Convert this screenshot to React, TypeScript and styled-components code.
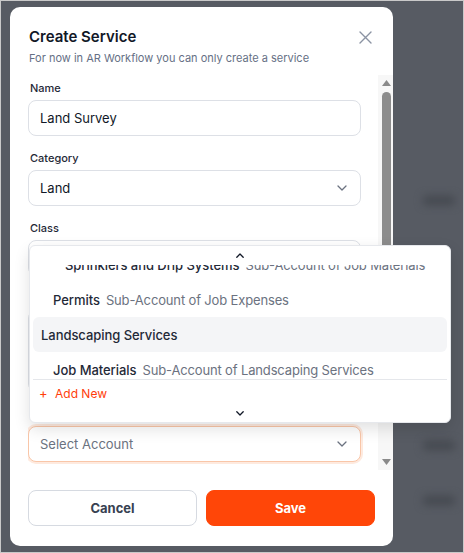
import React from 'react';
import styled, { createGlobalStyle } from 'styled-components';

const GlobalStyle = createGlobalStyle`
  html, body { margin: 0; padding: 0; background: #575b63; }
  body { font-family: Inter, "Noto Sans", Arial, sans-serif; -webkit-font-smoothing: antialiased; }
  * { box-sizing: border-box; }
`;

const Screen = styled.div`
  position: relative;
  width: 464px;
  height: 553px;
  overflow: hidden;
  background: #575b63;
  border: 1px solid #c9c9c9;
`;

const BackdropPage = styled.div`
  height: 100%;
  display: flex;
  flex-direction: column;
  align-items: flex-end;
  padding: 195px 8px 0 0;
  filter: blur(4px);
`;

const GhostCell = styled.div<{ $gap: number }>`
  width: 32px;
  height: 9px;
  border-radius: 4px;
  background: #44484f;
  margin-top: ${(p) => p.$gap}px;
`;

const Overlay = styled.div`
  position: absolute;
  inset: 0;
  display: flex;
  align-items: flex-start;
  padding: 6px 0 0 9px;
`;

const Modal = styled.div`
  width: 383px;
  background: #ffffff;
  border-radius: 10px;
  padding: 20px 18px 20px 18px;
  display: flex;
  flex-direction: column;
`;

const Header = styled.div`
  display: flex;
  align-items: center;
  justify-content: space-between;
  height: 20px;
`;

const Title = styled.h2`
  margin: 0;
  font-size: 15px;
  line-height: 20px;
  font-weight: 600;
  color: #111827;
  padding-left: 1px;
`;

const CloseButton = styled.button`
  width: 20px;
  height: 20px;
  border: none;
  background: none;
  padding: 0;
  display: flex;
  align-items: center;
  justify-content: center;
  color: #8b93a3;
`;

const Subtitle = styled.p`
  margin: 3px 0 0;
  font-size: 11px;
  line-height: 16px;
  color: #667085;
  padding-left: 1px;
`;

const Body = styled.div`
  margin: 9px -18px 0 0;
  height: 395px;
  display: flex;
`;

const Content = styled.div`
  flex: 1;
  overflow: hidden;
  padding: 5px 17px 0 0;
  display: flex;
  flex-direction: column;
  gap: 14px;
`;

const Field = styled.div`
  display: flex;
  flex-direction: column;
  gap: 4px;
`;

const Label = styled.label`
  font-size: 11px;
  line-height: 16px;
  font-weight: 500;
  color: #1f2937;
  padding-left: 2px;
`;

const Input = styled.div<{ $focused?: boolean; $tall?: boolean }>`
  height: ${(p) => (p.$tall ? 82 : 36)}px;
  border: 1px solid ${(p) => (p.$focused ? '#f9c6a8' : '#dde0e6')};
  box-shadow: ${(p) => (p.$focused ? '0 0 0 2px #feeadf' : 'none')};
  border-radius: 8px;
  padding: 0 13px 0 11px;
  display: flex;
  align-items: center;
  justify-content: space-between;
  font-size: 13px;
  color: #111827;
  background: #fff;
`;

const Placeholder = styled.span`
  color: #6b7280;
`;

const Scrollbar = styled.div`
  width: 15px;
  background: #f7f7f7;
  display: flex;
  flex-direction: column;
  align-items: center;
  padding-left: 1px;
`;

const ArrowBox = styled.div`
  height: 16px;
  display: flex;
  align-items: center;
  justify-content: center;
`;

const Thumb = styled.div`
  width: 9px;
  height: 250px;
  border-radius: 5px;
  background: #8c8c8c;
  margin-top: 1px;
`;

const Spacer = styled.div`
  flex: 1;
`;

const Footer = styled.div`
  margin-top: 20px;
  display: flex;
  gap: 9px;
`;

const Button = styled.button<{ $primary?: boolean }>`
  flex: 1;
  height: 36px;
  border-radius: 8px;
  border: 1px solid ${(p) => (p.$primary ? '#ff4608' : '#d6dae1')};
  background: ${(p) => (p.$primary ? '#ff4608' : '#ffffff')};
  color: ${(p) => (p.$primary ? '#ffffff' : '#374151')};
  font-family: inherit;
  font-size: 13px;
  font-weight: 700;
`;

const Dropdown = styled.div`
  position: absolute;
  left: 28px;
  top: 244px;
  width: 422px;
  height: 178px;
  background: #ffffff;
  border: 1px solid #e6e8ec;
  border-radius: 6px;
  box-shadow: 0 6px 16px rgba(0, 0, 0, 0.12);
  padding: 0 3px 2px;
  display: flex;
  flex-direction: column;
`;

const ScrollButton = styled.div<{ $h: number }>`
  height: ${(p) => p.$h}px;
  flex-shrink: 0;
  display: flex;
  align-items: center;
  justify-content: center;
  color: #111827;
`;

const Viewport = styled.div`
  height: 114px;
  flex-shrink: 0;
  overflow: hidden;
`;

const List = styled.div`
  margin-top: -18px;
  display: flex;
  flex-direction: column;
`;

const Item = styled.div<{ $level: number; $active?: boolean }>`
  height: 35px;
  flex-shrink: 0;
  display: flex;
  align-items: center;
  gap: 6px;
  padding-left: ${(p) => 8 + p.$level * 12}px;
  border-radius: 6px;
  background: ${(p) => (p.$active ? '#f4f5f7' : 'transparent')};
  font-size: 13px;
  white-space: nowrap;
`;

const ItemName = styled.span`
  font-weight: 500;
  color: #1f2937;
  letter-spacing: -0.05px;
`;

const ItemSub = styled.span`
  color: #6b7280;
  letter-spacing: -0.15px;
`;

const Separator = styled.div`
  height: 1px;
  flex-shrink: 0;
  background: #e5e7eb;
`;

const AddNew = styled.div`
  height: 26px;
  flex-shrink: 0;
  display: flex;
  align-items: center;
  gap: 9px;
  padding-left: 6px;
  color: #ff3d0a;
  font-size: 12px;
  font-weight: 400;
`;

const Plus = styled.span`
  font-size: 13px;
  font-weight: 400;
  width: 7px;
  text-align: center;
`;

const ChevronDown = ({ color = '#6b7280' }: { color?: string }) => (
  <svg width="10" height="6" viewBox="0 0 10 6" fill="none">
    <path d="M1 1 L5 5 L9 1" stroke={color} strokeWidth="1.3" strokeLinecap="round" strokeLinejoin="round" />
  </svg>
);

const SmallChevron = ({ up }: { up?: boolean }) => (
  <svg width="8" height="5" viewBox="0 0 8 5" fill="none">
    <path
      d={up ? 'M0.8 4.2 L4 1 L7.2 4.2' : 'M0.8 0.8 L4 4 L7.2 0.8'}
      stroke="#111827"
      strokeWidth="1.3"
      strokeLinecap="round"
      strokeLinejoin="round"
    />
  </svg>
);

const Triangle = ({ up }: { up?: boolean }) => (
  <svg width="9" height="6" viewBox="0 0 9 6">
    <polygon points={up ? '4.5,0 9,6 0,6' : '0,0 9,0 4.5,6'} fill="#8a8a8a" />
  </svg>
);

const CloseIcon = () => (
  <svg width="13" height="13" viewBox="0 0 13 13" fill="none">
    <path d="M1 1 L12 12 M12 1 L1 12" stroke="currentColor" strokeWidth="1.4" strokeLinecap="round" />
  </svg>
);

const items = [
  { level: 2, name: 'Sprinklers and Drip Systems', sub: 'Sub-Account of Job Materials' },
  { level: 1, name: 'Permits', sub: 'Sub-Account of Job Expenses' },
  { level: 0, name: 'Landscaping Services', active: true },
  { level: 1, name: 'Job Materials', sub: 'Sub-Account of Landscaping Services' },
  { level: 2, name: 'Plants and Soil', sub: 'Sub-Account of Job Materials' },
];

export default function App() {
  return (
    <>
      <GlobalStyle />
      <Screen>
        <BackdropPage>
          <GhostCell $gap={0} />
          <GhostCell $gap={236} />
          <GhostCell $gap={46} />
        </BackdropPage>
        <Overlay>
          <Modal>
            <Header>
              <Title>Create Service</Title>
              <CloseButton aria-label="Close">
                <CloseIcon />
              </CloseButton>
            </Header>
            <Subtitle>For now in AR Workflow you can only create a service</Subtitle>
            <Body>
              <Content>
                <Field>
                  <Label>Name</Label>
                  <Input>Land Survey</Input>
                </Field>
                <Field>
                  <Label>Category</Label>
                  <Input>
                    <span>Land</span>
                    <ChevronDown />
                  </Input>
                </Field>
                <Field>
                  <Label>Class</Label>
                  <Input>
                    <Placeholder>Select Class</Placeholder>
                    <ChevronDown />
                  </Input>
                </Field>
                <Field>
                  <Label>Description</Label>
                  <Input $tall />
                </Field>
                <Field>
                  <Label>Income Account</Label>
                  <Input $focused>
                    <Placeholder>Select Account</Placeholder>
                    <ChevronDown />
                  </Input>
                </Field>
              </Content>
              <Scrollbar>
                <ArrowBox>
                  <Triangle up />
                </ArrowBox>
                <Thumb />
                <Spacer />
                <ArrowBox>
                  <Triangle />
                </ArrowBox>
              </Scrollbar>
            </Body>
            <Footer>
              <Button>Cancel</Button>
              <Button $primary>Save</Button>
            </Footer>
          </Modal>
          <Dropdown>
            <ScrollButton $h={19}>
              <SmallChevron up />
            </ScrollButton>
            <Viewport>
              <List>
                {items.map((it) => (
                  <Item key={it.name} $level={it.level} $active={it.active}>
                    <ItemName>{it.name}</ItemName>
                    {it.sub && <ItemSub>{it.sub}</ItemSub>}
                  </Item>
                ))}
              </List>
            </Viewport>
            <Separator />
            <AddNew>
              <Plus>+</Plus>
              <span>Add New</span>
            </AddNew>
            <ScrollButton $h={14}>
              <SmallChevron />
            </ScrollButton>
          </Dropdown>
        </Overlay>
      </Screen>
    </>
  );
}
